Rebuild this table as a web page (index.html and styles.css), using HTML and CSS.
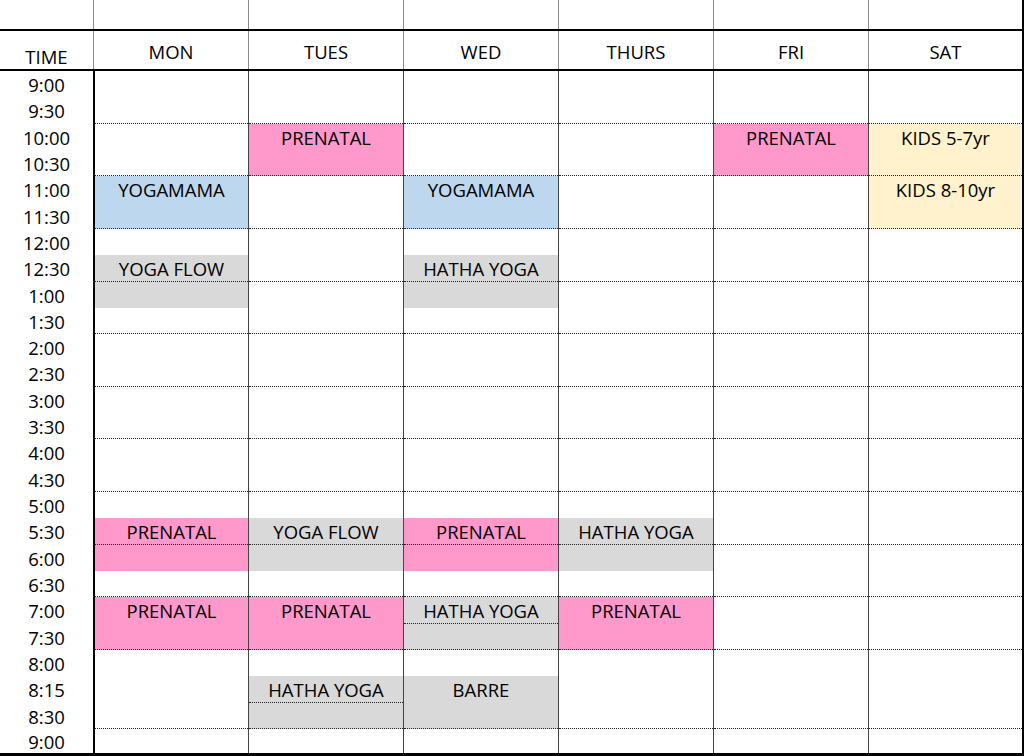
FILE: index.html
```html
<!DOCTYPE html>
<html lang="en">
<head>
<meta charset="utf-8">
<title>Class Schedule</title>
<link rel="stylesheet" href="styles.css">
</head>
<body>
<div class="sheet">
  <div class="band">
    <div class="tcol"></div>
    <div class="day"></div><div class="day"></div><div class="day"></div>
    <div class="day"></div><div class="day"></div><div class="day last"></div>
  </div>
  <div class="head">
    <div class="tcol htime">TIME</div>
    <div class="day hday">MON</div>
    <div class="day hday">TUES</div>
    <div class="day hday">WED</div>
    <div class="day hday">THURS</div>
    <div class="day hday">FRI</div>
    <div class="day hday last">SAT</div>
  </div>
  <div class="grid">
    <div class="col times">
      <div class="cell">9:00</div><div class="cell">9:30</div><div class="cell">10:00</div><div class="cell">10:30</div>
      <div class="cell">11:00</div><div class="cell">11:30</div><div class="cell">12:00</div><div class="cell">12:30</div>
      <div class="cell">1:00</div><div class="cell">1:30</div><div class="cell">2:00</div><div class="cell">2:30</div>
      <div class="cell">3:00</div><div class="cell">3:30</div><div class="cell">4:00</div><div class="cell">4:30</div>
      <div class="cell">5:00</div><div class="cell">5:30</div><div class="cell">6:00</div><div class="cell">6:30</div>
      <div class="cell">7:00</div><div class="cell">7:30</div><div class="cell">8:00</div><div class="cell">8:15</div>
      <div class="cell">8:30</div><div class="cell">9:00</div>
    </div>
    <!-- MON -->
    <div class="col dcol mon">
      <div class="cell"></div><div class="cell dot"></div>
      <div class="cell"></div><div class="cell dot"></div>
      <div class="cell blue">YOGAMAMA</div><div class="cell blue dot"></div>
      <div class="cell"></div><div class="cell grey dot">YOGA FLOW</div>
      <div class="cell grey"></div><div class="cell dot"></div>
      <div class="cell"></div><div class="cell dot"></div>
      <div class="cell"></div><div class="cell dot"></div>
      <div class="cell"></div><div class="cell dot"></div>
      <div class="cell"></div><div class="cell pink dot">PRENATAL</div>
      <div class="cell pink"></div><div class="cell dot"></div>
      <div class="cell pink">PRENATAL</div><div class="cell pink dot"></div>
      <div class="cell"></div><div class="cell"></div>
      <div class="cell dot"></div><div class="cell"></div>
    </div>
    <!-- TUES -->
    <div class="col dcol">
      <div class="cell"></div><div class="cell dot"></div>
      <div class="cell pink">PRENATAL</div><div class="cell pink dot"></div>
      <div class="cell"></div><div class="cell dot"></div>
      <div class="cell"></div><div class="cell dot"></div>
      <div class="cell"></div><div class="cell dot"></div>
      <div class="cell"></div><div class="cell dot"></div>
      <div class="cell"></div><div class="cell dot"></div>
      <div class="cell"></div><div class="cell dot"></div>
      <div class="cell"></div><div class="cell grey dot">YOGA FLOW</div>
      <div class="cell grey"></div><div class="cell dot"></div>
      <div class="cell pink">PRENATAL</div><div class="cell pink dot"></div>
      <div class="cell"></div><div class="cell grey dot">HATHA YOGA</div>
      <div class="cell grey dot"></div><div class="cell"></div>
    </div>
    <!-- WED -->
    <div class="col dcol">
      <div class="cell"></div><div class="cell dot"></div>
      <div class="cell"></div><div class="cell dot"></div>
      <div class="cell blue">YOGAMAMA</div><div class="cell blue dot"></div>
      <div class="cell"></div><div class="cell grey dot">HATHA YOGA</div>
      <div class="cell grey"></div><div class="cell dot"></div>
      <div class="cell"></div><div class="cell dot"></div>
      <div class="cell"></div><div class="cell dot"></div>
      <div class="cell"></div><div class="cell dot"></div>
      <div class="cell"></div><div class="cell pink dot">PRENATAL</div>
      <div class="cell pink"></div><div class="cell dot"></div>
      <div class="cell grey dot">HATHA YOGA</div><div class="cell grey dot"></div>
      <div class="cell"></div><div class="cell grey">BARRE</div>
      <div class="cell grey dot"></div><div class="cell"></div>
    </div>
    <!-- THURS -->
    <div class="col dcol">
      <div class="cell"></div><div class="cell dot"></div>
      <div class="cell"></div><div class="cell dot"></div>
      <div class="cell"></div><div class="cell dot"></div>
      <div class="cell"></div><div class="cell dot"></div>
      <div class="cell"></div><div class="cell dot"></div>
      <div class="cell"></div><div class="cell dot"></div>
      <div class="cell"></div><div class="cell dot"></div>
      <div class="cell"></div><div class="cell dot"></div>
      <div class="cell"></div><div class="cell grey dot">HATHA YOGA</div>
      <div class="cell grey"></div><div class="cell dot"></div>
      <div class="cell pink">PRENATAL</div><div class="cell pink dot"></div>
      <div class="cell"></div><div class="cell"></div>
      <div class="cell dot"></div><div class="cell"></div>
    </div>
    <!-- FRI -->
    <div class="col dcol">
      <div class="cell"></div><div class="cell dot"></div>
      <div class="cell pink">PRENATAL</div><div class="cell pink dot"></div>
      <div class="cell"></div><div class="cell dot"></div>
      <div class="cell"></div><div class="cell dot"></div>
      <div class="cell"></div><div class="cell dot"></div>
      <div class="cell"></div><div class="cell dot"></div>
      <div class="cell"></div><div class="cell dot"></div>
      <div class="cell"></div><div class="cell dot"></div>
      <div class="cell"></div><div class="cell dot"></div>
      <div class="cell"></div><div class="cell dot"></div>
      <div class="cell"></div><div class="cell dot"></div>
      <div class="cell"></div><div class="cell"></div>
      <div class="cell dot"></div><div class="cell"></div>
    </div>
    <!-- SAT -->
    <div class="col dcol sat">
      <div class="cell"></div><div class="cell dot"></div>
      <div class="cell cream">KIDS 5-7yr</div><div class="cell cream dot"></div>
      <div class="cell cream">KIDS 8-10yr</div><div class="cell cream dot"></div>
      <div class="cell"></div><div class="cell dot"></div>
      <div class="cell"></div><div class="cell dot"></div>
      <div class="cell"></div><div class="cell dot"></div>
      <div class="cell"></div><div class="cell dot"></div>
      <div class="cell"></div><div class="cell dot"></div>
      <div class="cell"></div><div class="cell dot"></div>
      <div class="cell"></div><div class="cell dot"></div>
      <div class="cell"></div><div class="cell dot"></div>
      <div class="cell"></div><div class="cell"></div>
      <div class="cell dot"></div><div class="cell"></div>
    </div>
  </div>
</div>
</body>
</html>
```
FILE: styles.css
```css
* { box-sizing: border-box; }
html, body { margin: 0; padding: 0; background: #fff; }
body {
  font-family: "Open Sans", "Noto Sans", sans-serif;
  font-size: 18.5px;
  font-weight: 500;
  color: #000;
  width: 1024px;
  height: 756px;
  overflow: hidden;
}
.sheet { display: flex; flex-direction: column; }

.band, .head, .grid {
  display: grid;
  grid-template-columns: 93px 155px 155px 155px 155px 155px 156px;
}
.band { height: 29px; }
.band .day, .head .day { border-left: 1px solid #8c8c8c; }
.band .last, .head .last { border-right: 2px solid #000; }

.head {
  height: 42px;
  border-top: 2px solid #000;
  border-bottom: 2px solid #000;
}
.hday {
  display: flex;
  justify-content: center;
  align-items: center;
  padding-top: 3px;
}
.htime {
  display: flex;
  justify-content: center;
  align-items: flex-end;
  line-height: 24px;
  padding-bottom: 0;
}

.grid { border-bottom: 3px solid #000; }
.col { display: flex; flex-direction: column; }
.dcol { border-left: 1px solid #444; }
.dcol.mon { border-left: 2px solid #000; }
.dcol.sat { border-right: 2px solid #000; }

.cell {
  flex: none;
  height: 26.32px;
  line-height: 26px;
  padding-top: 1px;
  text-align: center;
  white-space: nowrap;
}
.cell:last-child { height: 24px; line-height: 24px; }

.dot { border-bottom: 1px dotted #222; }
.pink { background: #ff99cc; }
.blue { background: #bdd7ee; }
.grey { background: #d9d9d9; }
.cream { background: #fff2cc; }
```
